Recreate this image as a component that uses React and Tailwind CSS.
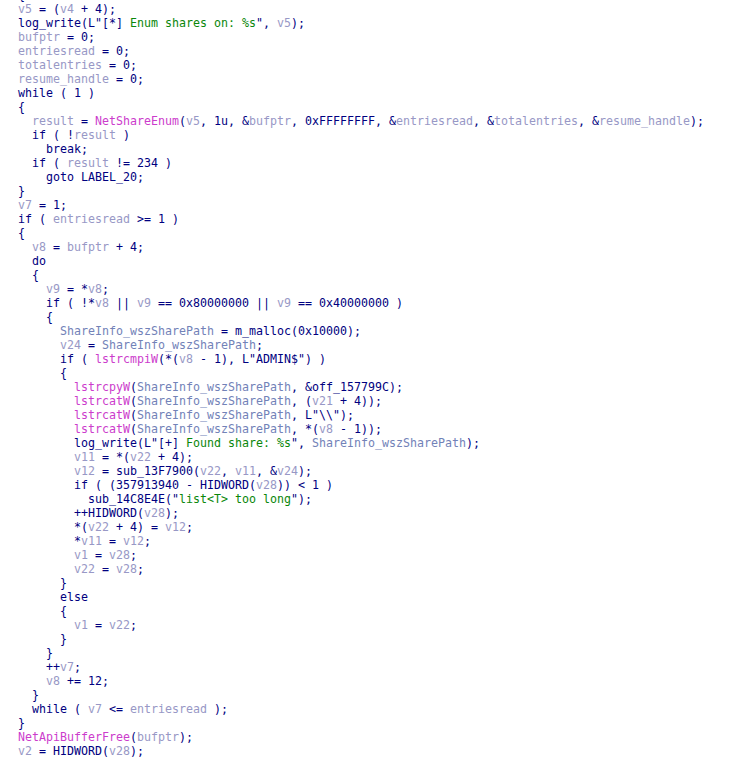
import React from "react";

const LOCALS = new Set([
  "v1","v2","v4","v5","v7","v8","v9","v11","v12","v21","v22","v24","v28",
  "bufptr","entriesread","totalentries","resume_handle","result",
]);
const GLOBALS = new Set(["ShareInfo_wszSharePath"]);
const IMPORTS = new Set(["NetShareEnum","lstrcmpiW","lstrcpyW","lstrcatW","NetApiBufferFree"]);

const LINES = [
  "{",
  "v5 = (v4 + 4);",
  'log_write(L"[*] {g:Enum shares on: %s}", v5);',
  "bufptr = 0;",
  "entriesread = 0;",
  "totalentries = 0;",
  "resume_handle = 0;",
  "while ( 1 )",
  "{",
  "  result = NetShareEnum(v5, 1u, &bufptr, 0xFFFFFFFF, &entriesread, &totalentries, &resume_handle);",
  "  if ( !result )",
  "    break;",
  "  if ( result != 234 )",
  "    goto LABEL_20;",
  "}",
  "v7 = 1;",
  "if ( entriesread >= 1 )",
  "{",
  "  v8 = bufptr + 4;",
  "  do",
  "  {",
  "    v9 = *v8;",
  "    if ( !*v8 || v9 == 0x80000000 || v9 == 0x40000000 )",
  "    {",
  "      ShareInfo_wszSharePath = m_malloc(0x10000);",
  "      v24 = ShareInfo_wszSharePath;",
  '      if ( lstrcmpiW(*(v8 - 1), L"ADMIN$") )',
  "      {",
  "        lstrcpyW(ShareInfo_wszSharePath, &off_157799C);",
  "        lstrcatW(ShareInfo_wszSharePath, (v21 + 4));",
  '        lstrcatW(ShareInfo_wszSharePath, L"\\\\");',
  "        lstrcatW(ShareInfo_wszSharePath, *(v8 - 1));",
  '        log_write(L"[+] {g:Found share: %s}", ShareInfo_wszSharePath);',
  "        v11 = *(v22 + 4);",
  "        v12 = sub_13F7900(v22, v11, &v24);",
  "        if ( (357913940 - HIDWORD(v28)) < 1 )",
  '          sub_14C8E4E("{g:list<T> too long}");',
  "        ++HIDWORD(v28);",
  "        *(v22 + 4) = v12;",
  "        *v11 = v12;",
  "        v1 = v28;",
  "        v22 = v28;",
  "      }",
  "      else",
  "      {",
  "        v1 = v22;",
  "      }",
  "    }",
  "    ++v7;",
  "    v8 += 12;",
  "  }",
  "  while ( v7 <= entriesread );",
  "}",
  "NetApiBufferFree(bufptr);",
  "v2 = HIDWORD(v28);",
];

function Line({ text }) {
  const parts = text.split(/(\{g:[^}]*\}|[A-Za-z_][A-Za-z0-9_]*)/);
  return (
    <div className="h-[14px] whitespace-pre">
      {parts.map((p, i) => {
        if (!p) return null;
        if (p.startsWith("{g:")) {
          return (
            <span key={i} className="text-[#0a870a]">
              {p.slice(3, -1)}
            </span>
          );
        }
        if (LOCALS.has(p)) return <span key={i} className="text-[#9898c6]">{p}</span>;
        if (GLOBALS.has(p)) return <span key={i} className="text-[#7282b8]">{p}</span>;
        if (IMPORTS.has(p)) return <span key={i} className="text-[#cc3ccc]">{p}</span>;
        return <span key={i}>{p}</span>;
      })}
    </div>
  );
}

export default function App() {
  return (
    <div className="w-[732px] h-[758px] overflow-hidden bg-white">
      <div
        className="flex flex-col pl-[18px] mt-[-12px] text-[11.63px] leading-[14px] text-[#000080]"
        style={{ fontFamily: '"DejaVu Sans Mono", monospace' }}
      >
        {LINES.map((t, i) => (
          <Line key={i} text={t} />
        ))}
      </div>
    </div>
  );
}
